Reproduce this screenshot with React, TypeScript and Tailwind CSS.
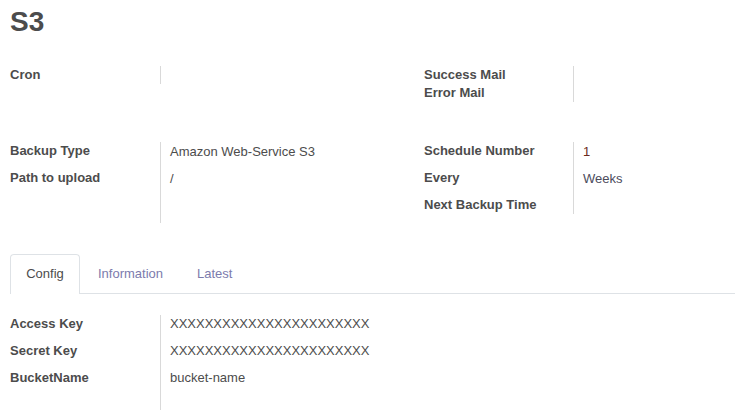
const font = { fontFamily: '"Liberation Sans", Arial, sans-serif' };

type Row = { label: string; value?: string; valueClass?: string; h: string };

const Group = ({
  rows,
  sepH,
  labelW,
  pad = "pt-[1px]",
}: {
  rows: Row[];
  sepH: string;
  labelW: string;
  pad?: string;
}) => (
  <div className="flex">
    <div className={`${labelW} shrink-0`}>
      {rows.map((r) => (
        <div key={r.label} className={`${r.h} font-bold text-[13px] leading-[18px] text-[#4c4c4c]`}>
          {r.label}
        </div>
      ))}
    </div>
    <div className={`border-l border-[#d9d9d9] pl-[9px] ${sepH}`}>
      {rows.map((r) => (
        <div
          key={r.label}
          className={`${r.h} text-[13px] leading-[18px] ${pad} ${r.valueClass ?? "text-[#4c4c4c]"}`}
        >
          {r.value ?? ""}
        </div>
      ))}
    </div>
  </div>
);

export default function App() {
  return (
    <div className="w-[735px] h-[414px] bg-white overflow-hidden pl-[10px]" style={font}>
      <h1 className="text-[28px] leading-[32px] font-bold text-[#4c4c4c] pt-[6px] h-[66px]">S3</h1>

      <div className="flex h-[76px]">
        <div className="w-[414px] shrink-0">
          <Group labelW="w-[150px]" sepH="h-[18px]" rows={[{ label: "Cron", h: "h-[18px]" }]} />
        </div>
        <Group
          labelW="w-[149px]"
          sepH="h-[36px]"
          rows={[
            { label: "Success Mail", h: "h-[18px]" },
            { label: "Error Mail", h: "h-[18px]" },
          ]}
        />
      </div>

      <div className="flex h-[112px]">
        <div className="w-[414px] shrink-0">
          <Group
            labelW="w-[150px]"
            sepH="h-[81px]"
            rows={[
              { label: "Backup Type", value: "Amazon Web-Service S3", h: "h-[27px]" },
              { label: "Path to upload", value: "/", h: "h-[27px]" },
            ]}
          />
        </div>
        <Group
          labelW="w-[149px]"
          sepH="h-[72px]"
          rows={[
            { label: "Schedule Number", value: "1", valueClass: "text-[#6b2a1c]", h: "h-[27px]" },
            { label: "Every", value: "Weeks", valueClass: "text-[#4c4c5c]", h: "h-[27px]" },
            { label: "Next Backup Time", h: "h-[18px]" },
          ]}
        />
      </div>

      <div className="flex items-end h-[40px] border-b border-[#dee2e6] -mr-[10px]">
        <div className="h-[40px] w-[70px] border border-b-0 border-[#dee2e6] rounded-t-[4px] bg-white -mb-px flex items-center justify-center pb-[1px] text-[13px] text-[#4c4c4c]">
          Config
        </div>
        <div className="h-[40px] flex items-center pt-[1px] px-[18px] text-[13px] text-[#7c7bad]">Information</div>
        <div className="h-[40px] flex items-center pt-[1px] px-[16px] text-[13px] text-[#7c7bad]">Latest</div>
      </div>

      <div className="pt-[21px]">
        <Group
          labelW="w-[150px]"
          sepH="h-[95px]"
          pad="pt-0"
          rows={[
            { label: "Access Key", value: "XXXXXXXXXXXXXXXXXXXXXXX", h: "h-[27px]" },
            { label: "Secret Key", value: "XXXXXXXXXXXXXXXXXXXXXXX", h: "h-[27px]" },
            { label: "BucketName", value: "bucket-name", h: "h-[27px]" },
          ]}
        />
      </div>
    </div>
  );
}
